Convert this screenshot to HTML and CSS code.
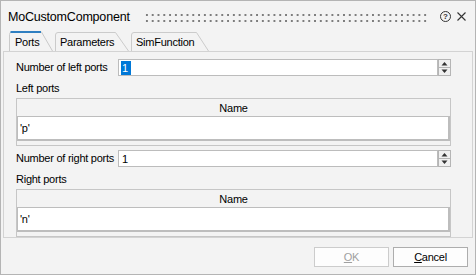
FILE: index.html
```html
<!DOCTYPE html>
<html lang="en">

<head>
  <meta charset="UTF-8">
  <meta name="viewport" content="width=device-width, initial-scale=1.0">
  <title>MoCustomComponent</title>
  <link rel="stylesheet" href="styles.css">
</head>

<body>
  <div class="window">
    <div class="titlebar">
      <span class="title">MoCustomComponent</span>
      <span class="grip"></span>
      <span class="help">?</span>
      <svg class="close" width="9" height="9" viewBox="0 0 9 9">
        <path d="M0.5 0.5 L8.5 8.5 M8.5 0.5 L0.5 8.5" stroke="#333" stroke-width="1.1" fill="none" />
      </svg>
    </div>

    <div class="tabs">
      <div class="tab tab-ports active">
        <svg class="tab-shape" width="44" height="20" viewBox="0 0 44 20">
          <path d="M0.5 20 V3.5 Q0.5 1 3 1 H32.5 L43.5 20" fill="#f3f3f3" stroke="#c9c9c9" />
          <path d="M1.5 1 H32" stroke="#2f7fc1" stroke-width="2" />
        </svg>
        <span>Ports</span>
      </div>
      <div class="tab tab-params">
        <svg class="tab-shape" width="74" height="20" viewBox="0 0 74 20">
          <path d="M0.5 20 V4 Q0.5 1.5 3 1.5 H60.5 L73.5 20" fill="none" stroke="#cbcbcb" />
        </svg>
        <span>Parameters</span>
      </div>
      <div class="tab tab-sim">
        <svg class="tab-shape" width="78" height="20" viewBox="0 0 78 20">
          <path d="M0.5 20 V4 Q0.5 1.5 3 1.5 H65.5 L77.5 20" fill="none" stroke="#cbcbcb" />
        </svg>
        <span>SimFunction</span>
      </div>
    </div>

    <div class="pane">
      <div class="field">
        <label>Number of left ports</label>
        <div class="spinbox">
          <span class="value"><span class="selected">1</span></span>
          <span class="spin-btns">
            <span class="spin-btn">
              <svg width="7" height="5" viewBox="0 0 7 5"><path d="M0.5 4.5 L3.5 1 L6.5 4.5 Z" fill="#333" /></svg>
            </span>
            <span class="spin-btn">
              <svg width="7" height="5" viewBox="0 0 7 5"><path d="M0.5 0.5 L3.5 4 L6.5 0.5 Z" fill="#333" /></svg>
            </span>
          </span>
        </div>
      </div>
      <div class="caption">Left ports</div>
      <div class="table">
        <div class="thead">Name</div>
        <div class="cell">'p'</div>
      </div>

      <div class="field">
        <label>Number of right ports</label>
        <div class="spinbox">
          <span class="value">1</span>
          <span class="spin-btns">
            <span class="spin-btn">
              <svg width="7" height="5" viewBox="0 0 7 5"><path d="M0.5 4.5 L3.5 1 L6.5 4.5 Z" fill="#333" /></svg>
            </span>
            <span class="spin-btn">
              <svg width="7" height="5" viewBox="0 0 7 5"><path d="M0.5 0.5 L3.5 4 L6.5 0.5 Z" fill="#333" /></svg>
            </span>
          </span>
        </div>
      </div>
      <div class="caption">Right ports</div>
      <div class="table">
        <div class="thead">Name</div>
        <div class="cell">'n'</div>
      </div>
    </div>

    <div class="buttons">
      <button class="btn" disabled><u>O</u>K</button>
      <button class="btn btn-cancel"><u>C</u>ancel</button>
    </div>
  </div>
</body>

</html>
```

FILE: styles.css
```css
body {
  margin: 0;
  padding: 0;
  font-family: "Liberation Sans", Arial, sans-serif;
  font-size: 11px;
  letter-spacing: -0.25px;
  color: #000;
}
.window {
  box-sizing: border-box;
  width: 476px;
  height: 275px;
  border: 1px solid #b4b4b4;
  background-color: #f3f3f3;
}

/* title bar */
.titlebar {
  display: flex;
  align-items: center;
  height: 30px;
  padding: 0 8px 0 7px;
}
.title {
  font-size: 12.5px;
  letter-spacing: -0.2px;
  padding-top: 1px;
}
.grip {
  flex: 1;
  height: 12px;
  margin: 4px 10px 0 15px;
  background-image: radial-gradient(circle, #7d7d7d 1.2px, transparent 1.4px);
  background-size: 5.8px 6px;
  background-position: -1px 0;
}
.help {
  box-sizing: border-box;
  width: 11px;
  height: 11px;
  border: 1px solid #333;
  border-radius: 50%;
  font-size: 8px;
  line-height: 9px;
  text-align: center;
  letter-spacing: 0;
  font-weight: bold;
  color: #333;
}
.close {
  margin-left: 6px;
  margin-right: 1px;
}

/* tabs */
.tabs {
  display: flex;
  height: 20px;
  padding-left: 8px;
}
.tab {
  position: relative;
  height: 20px;
  line-height: 22px;
  padding-left: 5px;
}
.tab span {
  position: relative;
}
.tab-shape {
  position: absolute;
  left: 0;
  top: 0;
}
.tab-ports {
  width: 44px;
  padding-left: 6px;
  box-sizing: border-box;
  margin-right: 2px;
  z-index: 1;
}
.tab-params {
  width: 74px;
  box-sizing: border-box;
  margin-right: 2px;
}
.tab-sim {
  width: 78px;
  box-sizing: border-box;
}

/* tab page */
.pane {
  box-sizing: border-box;
  height: 187px;
  margin: 0 2px;
  padding: 7px 21px 0 12px;
  border: 1px solid #d3d3d3;
}
.field {
  display: flex;
  height: 17px;
  align-items: stretch;
}
.field + .caption {
  margin-top: 4px;
}
.table + .field {
  margin-top: 4px;
}
.field label {
  width: 102px;
  line-height: 17px;
}
.spinbox {
  flex: 1;
  display: flex;
}
.value {
  flex: 1;
  box-sizing: border-box;
  border: 1px solid #bcbcbc;
  background-color: #fff;
  padding: 1px 0 0 3px;
  line-height: 14px;
}
.selected {
  display: inline-block;
  background-color: #0078d7;
  color: #fff;
  padding: 0 3px 0 1px;
  margin-left: -1px;
  line-height: 14px;
}
.spin-btns {
  display: flex;
  flex-direction: column;
  width: 13px;
}
.spin-btn {
  flex: 1;
  box-sizing: border-box;
  display: flex;
  justify-content: center;
  align-items: center;
  border: 1px solid #b5b5b5;
  background-color: #f0f0f0;
}
.spin-btn + .spin-btn {
  border-top: none;
}
.caption {
  height: 16px;
  line-height: 16px;
  margin-bottom: 2px;
}
.table {
  box-sizing: border-box;
  height: 48px;
  border: 1px solid #c6c6c6;
}
.thead {
  height: 17px;
  line-height: 18px;
  text-align: center;
}
.cell {
  box-sizing: border-box;
  height: 25px;
  line-height: 23px;
  padding-left: 2px;
  border: 1px solid #bdbdbd;
  border-width: 1px 2px 2px 1px;
  background-color: #fff;
}

/* buttons */
.buttons {
  display: flex;
  justify-content: flex-end;
  gap: 4px;
  margin-top: 9px;
  padding-right: 7px;
}
.btn {
  width: 75px;
  height: 20px;
  padding: 0;
  border: 1px solid #adadad;
  background-color: #fdfdfd;
  font-family: "Liberation Sans", Arial, sans-serif;
  font-size: 11px;
  letter-spacing: -0.25px;
  color: #000;
}
.btn:disabled {
  border-color: #cccccc;
  color: #a0a0a0;
}
```
